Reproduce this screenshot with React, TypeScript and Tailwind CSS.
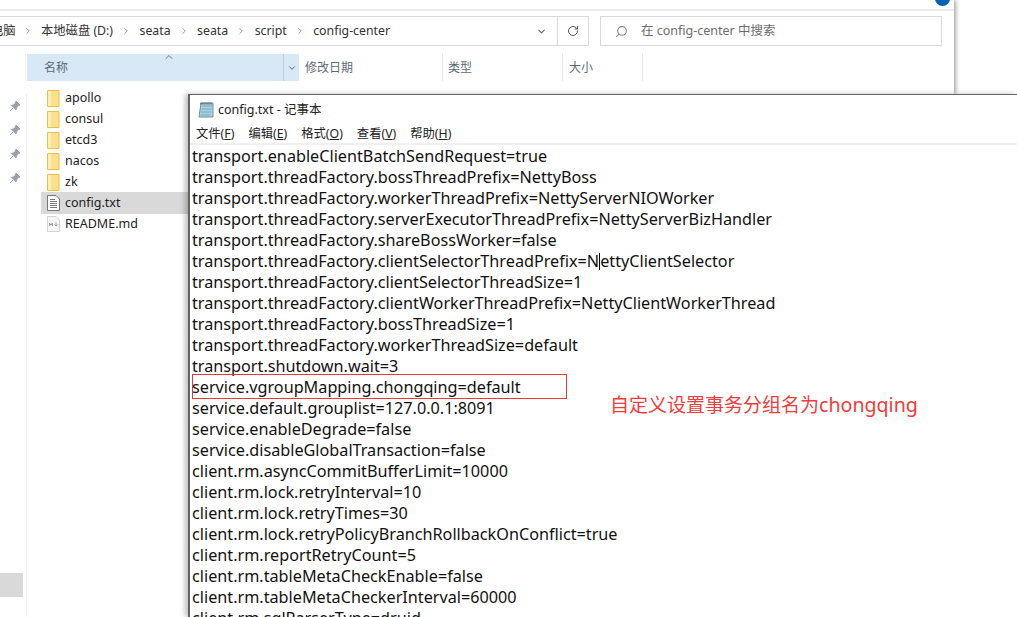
import React from "react";
import { ChevronDown, ChevronRight, ChevronUp, RotateCw, Search } from "lucide-react";

const SANS = "font-['Noto_Sans','Noto_Sans_CJK_SC',sans-serif]";

const lines = [
  "transport.enableClientBatchSendRequest=true",
  "transport.threadFactory.bossThreadPrefix=NettyBoss",
  "transport.threadFactory.workerThreadPrefix=NettyServerNIOWorker",
  "transport.threadFactory.serverExecutorThreadPrefix=NettyServerBizHandler",
  "transport.threadFactory.shareBossWorker=false",
  "transport.threadFactory.clientSelectorThreadPrefix=NettyClientSelector",
  "transport.threadFactory.clientSelectorThreadSize=1",
  "transport.threadFactory.clientWorkerThreadPrefix=NettyClientWorkerThread",
  "transport.threadFactory.bossThreadSize=1",
  "transport.threadFactory.workerThreadSize=default",
  "transport.shutdown.wait=3",
  "service.vgroupMapping.chongqing=default",
  "service.default.grouplist=127.0.0.1:8091",
  "service.enableDegrade=false",
  "service.disableGlobalTransaction=false",
  "client.rm.asyncCommitBufferLimit=10000",
  "client.rm.lock.retryInterval=10",
  "client.rm.lock.retryTimes=30",
  "client.rm.lock.retryPolicyBranchRollbackOnConflict=true",
  "client.rm.reportRetryCount=5",
  "client.rm.tableMetaCheckEnable=false",
  "client.rm.tableMetaCheckerInterval=60000",
  "client.rm.sqlParserType=druid",
];

const crumbs = ["本地磁盘 (D:)", "seata", "seata", "script", "config-center"];
const folders = ["apollo", "consul", "etcd3", "nacos", "zk"];

function FolderIcon() {
  return (
    <svg width="13" height="17" viewBox="0 0 13 17" className="shrink-0">
      <path d="M.5.5h11.500v16H.5z" fill="#fde08a" stroke="#e8c04f" />
      <path d="M1 1h3v15H1z" fill="#fdeeb5" />
    </svg>
  );
}

function TextFileIcon() {
  return (
    <svg width="13" height="16" viewBox="0 0 13 16" className="shrink-0">
      <path d="M.5.5h8.500l3.500 3.500v11.500H.5z" fill="#fff" stroke="#777" />
      <path d="M3 4.500h5M3 6.500h7M3 8.500h7M3 10.500h7M3 12.500h7" stroke="#777" />
    </svg>
  );
}

function MdFileIcon() {
  return (
    <svg width="13" height="16" viewBox="0 0 13 16" className="shrink-0">
      <path d="M.5.5h8.500l3.500 3.500v11.500H.5z" fill="#f7f7f7" stroke="#d4d4d4" />
      <path d="M2.500 10V7l1.500 2 1.500-2v3M9 6.500V10M7.500 8.500 9 10l1.500-1.500" fill="none" stroke="#9a9a9a" />
    </svg>
  );
}

function NotepadIcon() {
  return (
    <svg width="16" height="17" viewBox="0 0 16 17" className="shrink-0">
      <path d="M3 1h12v14H1z" fill="#a9d3e4" stroke="#6f8f9d" />
      <path d="M4 4h10M3.500 7h10M3 10h10M2.500 13h10" stroke="#7ba6b8" />
      <path d="M3 .5v2M5 .5v2M7 .5v2M9 .5v2M11 .5v2M13 .5v2" stroke="#555" />
    </svg>
  );
}

function PinIcon() {
  return (
    <svg width="12" height="12" viewBox="0 0 12 12">
      <path d="M7 1l4 4-1.500.5L7.500 8 7 10 2.500 5.500 4.500 5l2-2zM4 8l-3 3" fill="#9aa2aa" stroke="#9aa2aa" />
    </svg>
  );
}

export default function App() {
  return (
    <div className={`relative w-[1017px] h-[617px] overflow-hidden bg-white ${SANS}`}>
      {/* explorer window */}
      <div className="w-[954px] h-[94px] shadow-[2px_0_4px_rgba(0,0,0,0.35)] bg-white">
        <div className="h-[11px] border-b-2 border-[#ececec] relative overflow-hidden">
          <span className="absolute left-[8px] top-[-15px] text-[11px] leading-[18px] text-[#444]">查看</span>
          <div className="absolute right-[4px] top-[-9px] w-[15px] h-[15px] rounded-full bg-[#0b63b5]" />
        </div>
        <div className="flex h-[30px] mt-[5px] pr-[12px]">
          <div className="w-[557px] shrink-0 flex items-center border-y border-[#d9d9d9] text-[12.3px] text-[#333] overflow-hidden">
            <span className="ml-[-9px] w-[24px] shrink-0 whitespace-nowrap">电脑</span>
            <ChevronRight size={10} className="mx-[8px] text-[#888] shrink-0" strokeWidth={2} />
            {crumbs.map((c, i) => (
              <React.Fragment key={i}>
                <span className="whitespace-nowrap">{c}</span>
                {i < crumbs.length - 1 && (
                  <ChevronRight size={10} className="mx-[8.25px] text-[#888] shrink-0" strokeWidth={2} />
                )}
              </React.Fragment>
            ))}
            <div className="flex-1" />
            <ChevronDown size={11} className="mr-[10px] text-[#666]" strokeWidth={2.5} />
          </div>
          <div className="w-[32px] shrink-0 border border-[#d9d9d9] flex items-center justify-center">
            <RotateCw size={12} className="text-[#555]" />
          </div>
          <div className="ml-[11px] flex-1 border border-[#d9d9d9] flex items-center text-[12.5px] text-[#6d6d6d] whitespace-nowrap">
            <Search size={13} className="ml-[14px] mr-[13px] -scale-x-100 text-[#888]" />
            在 config-center 中搜索
          </div>
        </div>
        <div className="flex h-[27px] mt-[8px] text-[12px] text-[#5d6a75]">
          <div className="w-[26px] shrink-0 border-r border-[#f0f0f0]" />
          <div className="w-[272px] shrink-0 bg-[#d9e8f6] flex items-center relative ml-px">
            <span className="ml-[17px]">名称</span>
            <ChevronUp size={12} className="absolute left-[136px] top-[-3px] text-[#777]" />
            <div className="absolute right-0 inset-y-0 w-[16px] border-l border-[#b9cfe3] flex items-center justify-center">
              <ChevronDown size={10} className="text-[#444]" strokeWidth={2} />
            </div>
          </div>
          <div className="w-[144px] shrink-0 flex items-center pl-[6px] border-r border-[#e5e5e5]">修改日期</div>
          <div className="w-[120px] shrink-0 flex items-center pl-[5px] border-r border-[#e5e5e5]">类型</div>
          <div className="w-[80px] shrink-0 flex items-center pl-[6px] border-r border-[#e5e5e5]">大小</div>
        </div>
      </div>

      {/* navigation pane + file list */}
      <div className="flex h-[523px] bg-white">
        <div className="w-[27px] shrink-0 border-r border-[#f0f0f0] flex flex-col relative">
          <div className="flex flex-col gap-[12px] pl-[9px] pt-[6px]">
            <PinIcon />
            <PinIcon />
            <PinIcon />
            <PinIcon />
          </div>
          <div className="mt-[389px] w-[23px] h-[24px] bg-[#d9d9d9]" />
        </div>
        <div className="w-[161px] shrink-0 pl-[14px] -mt-[6px] text-[12.5px] text-[#222]">
          {folders.map((f) => (
            <div key={f} className="h-[21px] flex items-center gap-[5px] pl-[6px]">
              <FolderIcon />
              {f}
            </div>
          ))}
          <div className="h-[22px] -mt-px flex items-center gap-[5px] pl-[6px] bg-[#d9d9d9]">
            <TextFileIcon />
            config.txt
          </div>
          <div className="h-[20px] flex items-center gap-[5px] pl-[6px]">
            <MdFileIcon />
            README.md
          </div>
        </div>
      </div>

      {/* notepad window */}
      <div className="absolute left-[188px] top-[94px] w-[829px] h-[523px] bg-white border-l-2 border-t border-[#646464] shadow-[-3px_0_5px_rgba(0,0,0,0.25)] overflow-hidden">
        <div className="h-[30px] flex items-center gap-[4px] pl-[8px] text-[12.5px] text-[#222]">
          <NotepadIcon />
          config.txt - 记事本
        </div>
        <div className="h-[20px] pt-px flex items-center gap-[14px] pl-[6px] text-[12.3px] text-[#222] border-b-2 border-[#f0f0f0]">
          <span>文件(<u>F</u>)</span>
          <span>编辑(<u>E</u>)</span>
          <span>格式(<u>O</u>)</span>
          <span>查看(<u>V</u>)</span>
          <span>帮助(<u>H</u>)</span>
        </div>
        <div className="pl-[2px] pt-[1px] text-[16.22px] leading-[21px] text-[#111] whitespace-nowrap">
          {lines.map((l, i) =>
            i === 5 ? (
              <div key={i} className="h-[21px]">
                transport.threadFactory.clientSelectorThreadPrefix=N
                <span className="inline-block w-px h-[17px] bg-black align-[-3px]" />
                ettyClientSelector
              </div>
            ) : (
              <div key={i} className="h-[21px]">
                {l}
              </div>
            ),
          )}
        </div>
        {/* red annotation */}
        <div className="absolute left-[2px] top-[279px] w-[375px] h-[25px] border border-[#e53935]" />
        <div className="absolute left-[420px] top-[298px] text-[19px] leading-[24px] text-[#f23b3b] whitespace-nowrap">
          自定义设置事务分组名为<span className="text-[19.6px]">chongqing</span>
        </div>
      </div>
    </div>
  );
}
